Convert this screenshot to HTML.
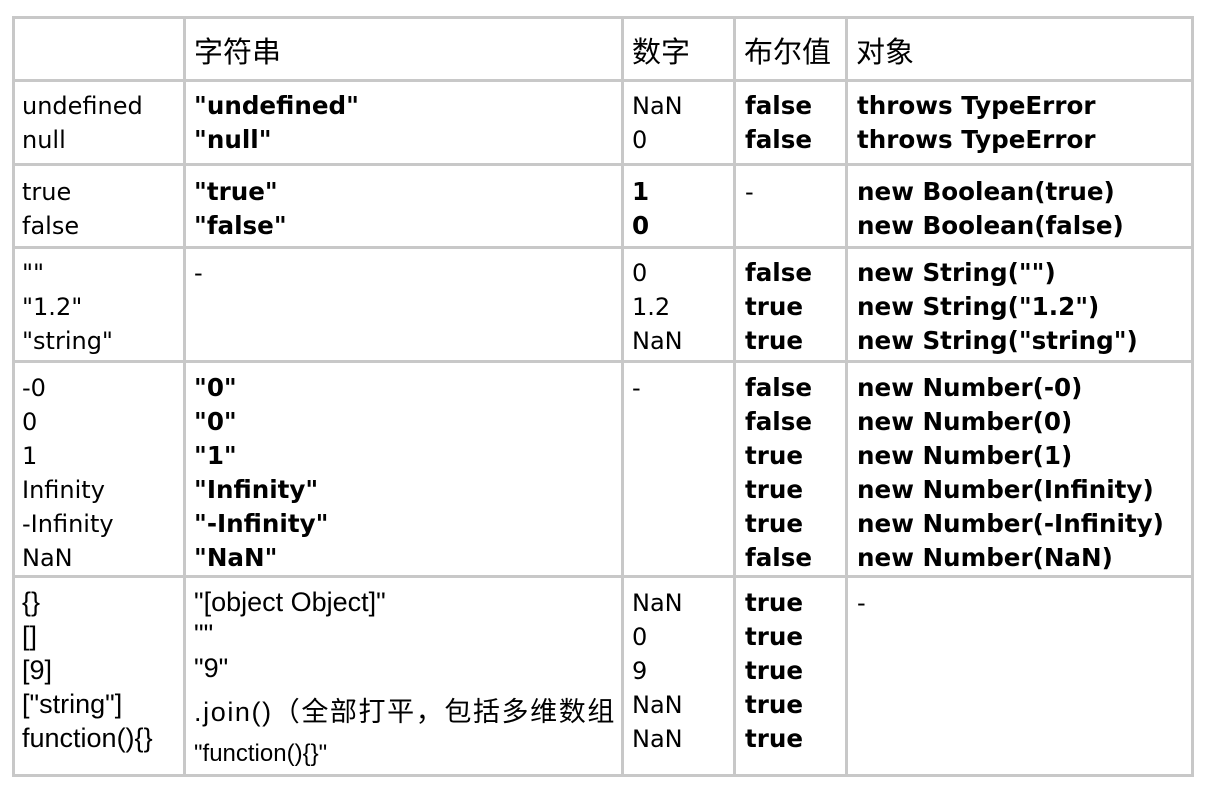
<!DOCTYPE html>
<html><head><meta charset="utf-8"><style>
body{margin:0;width:1208px;height:792px;background:#fff;position:relative;overflow:hidden;font-family:"DejaVu Sans","Noto Sans CJK SC",sans-serif;font-size:24px;color:#000}
.h{position:absolute;background:#c8c8c8;height:3px}
.v{position:absolute;background:#c8c8c8;width:3px}
.t{position:absolute;line-height:34px;white-space:pre}
.b{font-weight:bold;font-size:24.6px}
.c{font-family:"Noto Sans CJK SC",sans-serif;font-size:29px}
.n{font-family:"Liberation Sans","Noto Sans CJK SC",sans-serif;font-size:27px}
</style></head><body>
<div class="h" style="left:12px;top:16px;width:1182px"></div>
<div class="h" style="left:12px;top:79px;width:1182px"></div>
<div class="h" style="left:12px;top:163px;width:1182px"></div>
<div class="h" style="left:12px;top:246px;width:1182px"></div>
<div class="h" style="left:12px;top:360px;width:1182px"></div>
<div class="h" style="left:12px;top:575px;width:1182px"></div>
<div class="h" style="left:12px;top:774px;width:1182px"></div>
<div class="v" style="left:12px;top:16px;height:761px"></div>
<div class="v" style="left:183px;top:16px;height:761px"></div>
<div class="v" style="left:621px;top:16px;height:761px"></div>
<div class="v" style="left:733px;top:16px;height:761px"></div>
<div class="v" style="left:845px;top:16px;height:761px"></div>
<div class="v" style="left:1191px;top:16px;height:761px"></div>

<div class="t c" style="left:194px;top:33px">字符串</div>
<div class="t c" style="left:632px;top:33px">数字</div>
<div class="t c" style="left:744px;top:33px">布尔值</div>
<div class="t c" style="left:856px;top:33px">对象</div>

<div class="t" style="left:22px;top:89px">undefined
null</div>
<div class="t b" style="left:194px;top:89px">"undefined"
"null"</div>
<div class="t" style="left:632px;top:89px">NaN
0</div>
<div class="t b" style="left:745px;top:89px">false
false</div>
<div class="t b" style="left:857px;top:89px">throws TypeError
throws TypeError</div>

<div class="t" style="left:22px;top:175px">true
false</div>
<div class="t b" style="left:194px;top:175px">"true"
"false"</div>
<div class="t b" style="left:632px;top:175px">1
0</div>
<div class="t" style="left:745px;top:175px">-</div>
<div class="t b" style="left:857px;top:175px">new Boolean(true)
new Boolean(false)</div>

<div class="t" style="left:22px;top:256px">""
"1.2"
"string"</div>
<div class="t" style="left:194px;top:256px">-</div>
<div class="t" style="left:632px;top:256px">0
1.2
NaN</div>
<div class="t b" style="left:745px;top:256px">false
true
true</div>
<div class="t b" style="left:857px;top:256px">new String("")
new String("1.2")
new String("string")</div>

<div class="t" style="left:22px;top:371px">-0
0
1
Infinity
-Infinity
NaN</div>
<div class="t b" style="left:194px;top:371px">"0"
"0"
"1"
"Infinity"
"-Infinity"
"NaN"</div>
<div class="t" style="left:632px;top:371px">-</div>
<div class="t b" style="left:745px;top:371px">false
false
true
true
true
false</div>
<div class="t b" style="left:857px;top:371px">new Number(-0)
new Number(0)
new Number(1)
new Number(Infinity)
new Number(-Infinity)
new Number(NaN)</div>

<div class="t n" style="left:22px;top:585px">{}
[]
[9]
["string"]
function(){}</div>
<div class="t n" style="left:194px;top:585px">"[object Object]"</div>
<div class="t n" style="left:194px;top:617px">""</div>
<div class="t n" style="left:194px;top:651px">"9"</div>
<div class="t n" style="left:194px;top:695px;letter-spacing:1.6px">.join()（全部打平，包括多维数组</div>
<div class="t n" style="left:194px;top:737px;font-size:24px">"function(){}"</div>
<div class="t" style="left:632px;top:586px">NaN
0
9
NaN
NaN</div>
<div class="t b" style="left:745px;top:586px">true
true
true
true
true</div>
<div class="t" style="left:857px;top:586px">-</div>
</body></html>
